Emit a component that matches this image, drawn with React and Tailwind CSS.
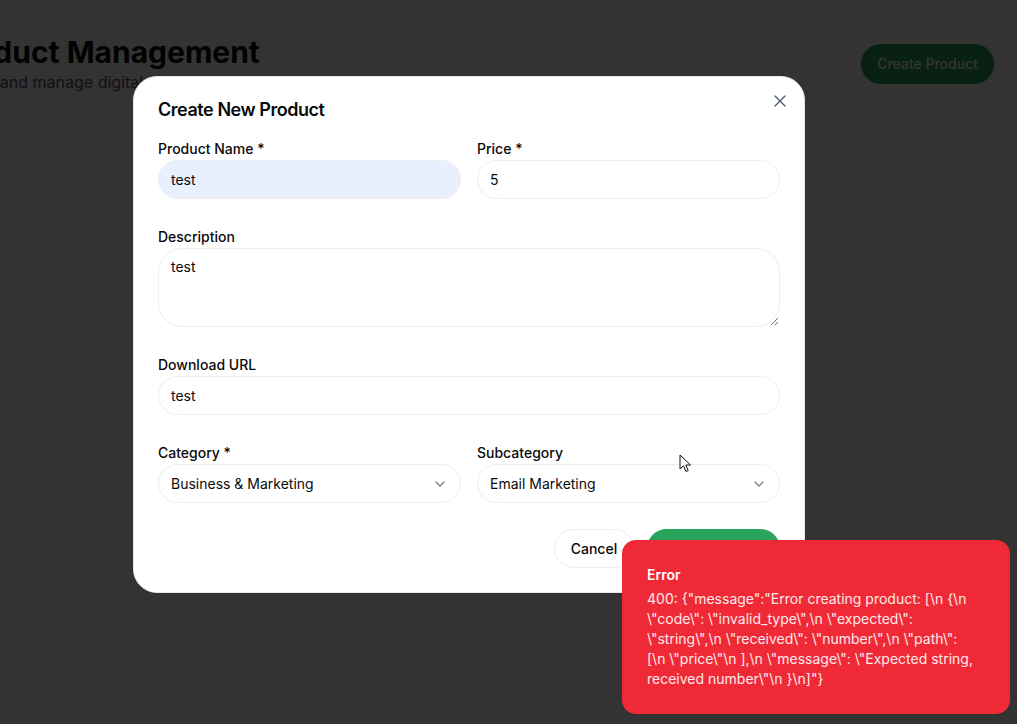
import React from 'react';
import { X, ChevronDown } from 'lucide-react';

const inputBase =
  'block w-full h-[39px] rounded-full border border-[#eeeeee] px-3 text-sm text-[#0a0a0a] outline-none';

function Field({ label, children, className = '' }) {
  return (
    <div className={className}>
      <label className="block text-sm font-medium leading-none text-[#0a0a0a]">{label}</label>
      <div className="mt-1">{children}</div>
    </div>
  );
}

function FakeSelect({ value }) {
  return (
    <div className={`${inputBase} flex items-center justify-between bg-white`}>
      <span>{value}</span>
      <ChevronDown className="w-4 h-4 text-[#0a0a0a] opacity-50" />
    </div>
  );
}

export default function App() {
  return (
    <div className="relative min-h-[724px] overflow-hidden bg-white font-['Inter',sans-serif]">
      {/* page behind the dialog */}
      <div className="flex items-center justify-between pt-[34px] ml-[-56px] mr-[23px]">
        <div>
          <h1 className="text-3xl font-bold text-[#0a0a0a]">Product Management</h1>
          <p className="text-base text-gray-600 ml-[1px]">Create and manage digital products</p>
        </div>
        <button className="h-10 px-4 rounded-full bg-[#28a55a] text-white text-sm font-medium">
          Create Product
        </button>
      </div>

      {/* overlay */}
      <div className="absolute inset-0 bg-black/80" />

      {/* dialog */}
      <div className="absolute left-[133px] top-[76px] w-[672px] rounded-3xl border border-gray-200 bg-white p-6">
        <button className="absolute right-[14px] top-[14px] text-gray-600">
          <X size={20} strokeWidth={1.5} />
        </button>
        <h2 className="text-lg font-semibold leading-none tracking-tight text-[#0a0a0a]">
          Create New Product
        </h2>

        <div className="mt-[23px] flex flex-col gap-[31px]">
          <div className="grid grid-cols-2 gap-4">
            <Field label="Product Name *">
              <input className={`${inputBase} bg-[#e8f0fe]`} defaultValue="test" />
            </Field>
            <Field label="Price *">
              <input className={`${inputBase} bg-white`} defaultValue="5" />
            </Field>
          </div>

          <Field label="Description">
            <textarea
              className="block w-full h-[79px] rounded-3xl border border-[#eeeeee] px-3 py-2 text-sm leading-5 text-[#0a0a0a] outline-none"
              defaultValue="test"
            />
          </Field>

          <Field label="Download URL">
            <input className={`${inputBase} bg-white`} defaultValue="test" />
          </Field>

          <div className="grid grid-cols-2 gap-4">
            <Field label="Category *">
              <FakeSelect value="Business & Marketing" />
            </Field>
            <Field label="Subcategory">
              <FakeSelect value="Email Marketing" />
            </Field>
          </div>
        </div>

        <div className="mt-[26px] flex justify-end gap-[13px]">
          <button className="h-[39px] px-4 rounded-full border border-[#eeeeee] bg-white text-sm font-medium text-[#0a0a0a]">
            Cancel
          </button>
          <button className="h-[39px] px-4 rounded-full bg-[#28a55a] text-sm font-medium text-white">
            Create Product
          </button>
        </div>
      </div>

      {/* mouse pointer */}
      <svg
        className="absolute left-[679px] top-[454px]"
        width="14"
        height="20"
        viewBox="0 0 14 20"
      >
        <path
          d="M1 1 L1 15 L4.5 11.8 L7 17.5 L9.2 16.5 L6.8 11 L11.5 11 Z"
          fill="white"
          stroke="#111"
          strokeWidth="1"
          strokeLinejoin="round"
        />
      </svg>

      {/* toast */}
      <div className="absolute right-[7px] bottom-[10px] w-[388px] rounded-[14px] bg-[#ef2936] px-[25px] py-[25px] text-white">
        <div className="text-sm font-semibold leading-5">Error</div>
        <div className="mt-1 text-sm leading-5 text-white/90">
          400: {'{"message":"Error creating product: [\\n {\\n'}
          <br />
          {'\\"code\\": \\"invalid_type\\",\\n \\"expected\\":'}
          <br />
          {'\\"string\\",\\n \\"received\\": \\"number\\",\\n \\"path\\":'}
          <br />
          {'[\\n \\"price\\"\\n ],\\n \\"message\\": \\"Expected string,'}
          <br />
          {'received number\\"\\n }\\n]"}'}
        </div>
      </div>
    </div>
  );
}
